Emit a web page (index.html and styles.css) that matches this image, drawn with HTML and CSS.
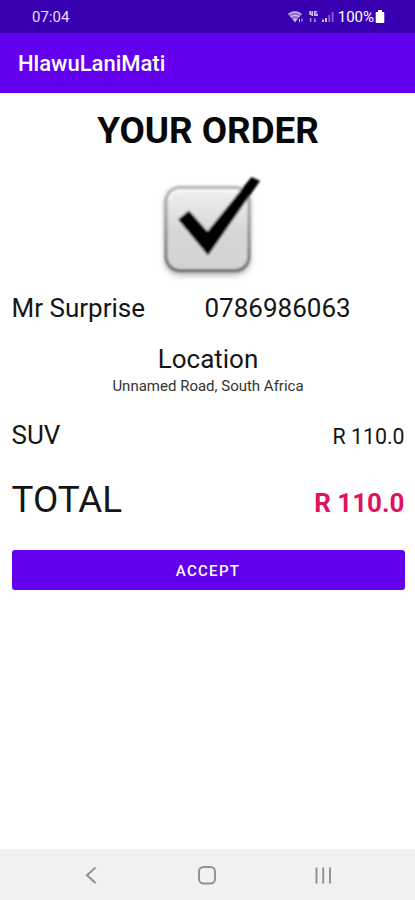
FILE: index.html
```html
<!DOCTYPE html>
<html lang="en">
<head>
<meta charset="utf-8">
<title>HlawuLaniMati</title>
<link rel="stylesheet" href="styles.css">
</head>
<body>
<div class="screen">
  <div class="status">
    <span class="clock">07:04</span>
    <svg class="signals" width="48" height="18" viewBox="0 0 48 18">
      <g fill="#fff" opacity=".75">
        <path d="M0 6.2Q6.8 .8 13.8 6.2L7 14.5z" opacity=".6"/>
        <path d="M.5 6.2Q7 1.5 13.3 6.2M2.800 8.800Q7 5.800 11.200 8.800" fill="none" stroke="#fff" stroke-width="1.300"/>
        <path d="M5 11.200Q7 9.800 9 11.200L7 14z"/>
        <path d="M11.500 14V11M14 10.500V13.500" fill="none" stroke="#fff"/>
        <path d="M22.200 3v3.200H25M24.300 3v5M29 3.800h-2.200v3.400H29V5.600" fill="none" stroke="#fff" stroke-width="1.600"/>
        <path d="M22.800 14v-3.600l-1 1.400M26.800 10.400V14l1-1.400" fill="none" stroke="#fff"/>
        <path d="M34 14v-2.400h2V14zM37 14v-4h2v4z"/>
        <path d="M40.300 14V7h1.800v7zM43.600 14V4h1.900v10z" opacity=".5"/>
      </g>
    </svg>
    <span class="percent">100%</span>
    <svg class="battery" width="10" height="14" viewBox="0 0 10 14"><path d="M3 0h4v2h1.300q1 0 1 1v9q0 1-1 1H1.700q-1 0-1-1V3q0-1 1-1H3z" fill="#fff"/></svg>
  </div>
  <header class="appbar">HlawuLaniMati</header>
  <main class="content">
    <h1 class="heading">YOUR ORDER</h1>
    <svg class="check" width="125" height="117" viewBox="0 0 125 117">
      <defs>
        <linearGradient id="face" x1="0" y1="0" x2="0" y2="1"><stop offset="0" stop-color="#f1f1f1"/><stop offset=".5" stop-color="#d8d8d8"/><stop offset="1" stop-color="#d2d2d2"/></linearGradient>
        <linearGradient id="edge" x1="0" y1="0" x2="0" y2="1"><stop offset="0" stop-color="#b9b9b9"/><stop offset="1" stop-color="#707070"/></linearGradient>
        <filter id="shadow" x="-20%" y="-20%" width="140%" height="140%"><feGaussianBlur stdDeviation="3"/></filter>
        <filter id="soft" x="-10%" y="-10%" width="120%" height="120%"><feGaussianBlur stdDeviation=".8"/></filter>
      </defs>
      <rect x="15" y="21" width="85" height="86" rx="15" fill="#777" opacity=".6" filter="url(#shadow)"/>
      <g filter="url(#soft)">
        <rect x="16" y="19.500" width="83" height="83" rx="14" fill="url(#face)" stroke="url(#edge)" stroke-width="3"/>
        <path d="M20 32Q20 23 30 23H85Q95 23 95 32" fill="none" stroke="#fff" stroke-width="2" opacity=".7"/>
        <path d="M28.500 51.500L39 43L57.500 64L101.500 9.500L109.500 13L58 87z" fill="#000" stroke="#000" stroke-width="1"/>
      </g>
    </svg>
    <div class="customer"><span>Mr Surprise</span><span>0786986063</span></div>
    <h2 class="location">Location</h2>
    <p class="address">Unnamed Road, South Africa</p>
    <div class="row item"><span>SUV</span><span class="price">R 110.0</span></div>
    <div class="row total"><span class="label">TOTAL</span><strong class="sum">R 110.0</strong></div>
    <button class="accept">ACCEPT</button>
  </main>
  <nav class="nav">
    <svg width="415" height="50" viewBox="0 0 415 50" fill="none" stroke="#929292" stroke-width="2">
      <path d="M95.500 17.500L87 25.200L95.500 33"/>
      <rect x="199" y="17" width="16" height="16.500" rx="4.500"/>
      <path d="M316.500 17.500v16M323.200 17.500v16M330 17.500v16"/>
    </svg>
  </nav>
</div>
</body>
</html>
```
FILE: styles.css
```css
* { box-sizing: border-box; }
body { margin: 0; font-family: Roboto, sans-serif; color: #151515; background: #fff; }
.screen { width: 415px; height: 900px; display: flex; flex-direction: column; overflow: hidden; }
.status { height: 33px; padding: 0 30px 0 32px; background: #3900b2; color: #e8dcfb; display: flex; align-items: center; font-size: 15px; }
.clock { margin-right: auto; }
.signals { margin-right: 2px; }
.percent { color: #fff; margin-right: 1px; }
.appbar { height: 60px; padding-left: 18px; background: #6200ee; color: #fff; font-size: 22px; font-weight: 500; line-height: 61px; }
.content { flex: 1; padding: 0 10.5px 0 11.5px; display: flex; flex-direction: column; }
.heading { margin: 0; font-size: 36.8px; font-weight: 700; line-height: 75px; text-align: center; color: #080808; }
.check { align-self: center; margin-left: 8px; }
.customer { display: flex; font-size: 26px; line-height: 46px; }
.customer span:first-child { width: 193px; }
.location { margin: 10px 0 0; font-size: 26px; font-weight: 400; line-height: 36px; text-align: center; }
.address { margin: 0; font-size: 15px; line-height: 18px; text-align: center; color: #333; }
.row { display: flex; justify-content: space-between; align-items: baseline; }
.item { font-size: 26px; line-height: 80px; height: 80px; }
.price { font-size: 21.3px; }
.total { height: 49px; line-height: 49px; }
.label { font-size: 36.8px; }
.sum { font-size: 26px; font-weight: 700; color: #e0115f; }
.accept { margin-top: 26px; height: 40px; padding: 2px 0 0; border: 0; border-radius: 3px; background: #6200ee; color: #fff; font: 500 15px Roboto, sans-serif; letter-spacing: 1.3px; }
.nav { height: 51px; background: #f1f1f1; }
.nav svg { display: block; margin-top: 1px; }
```
